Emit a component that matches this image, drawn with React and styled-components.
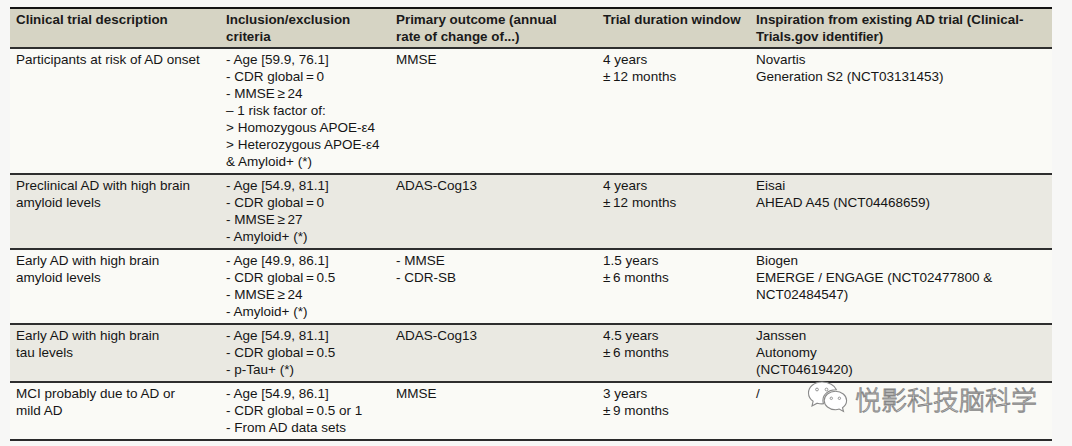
import React from "react";
import styled, { createGlobalStyle } from "styled-components";

const GlobalStyle = createGlobalStyle`
  html, body {
    margin: 0;
    padding: 0;
    background: #f7f7f6;
  }
  body {
    font-family: "Liberation Sans", Arial, sans-serif;
    color: #151515;
  }
`;

const Page = styled.div`
  position: relative;
  padding: 7px 0 0 10px;
  height: 446px;
  overflow: hidden;
  box-sizing: border-box;
`;

const Table = styled.table`
  width: 1042px;
  border-collapse: collapse;
  table-layout: fixed;
  border-top: 2px solid #141414;
  border-bottom: 2px solid #2a2a2a;
`;

const HeadRow = styled.tr`
  background: #d6d4c4;
  border-bottom: 1px solid #3c3c3c;
`;

const HeadCell = styled.th`
  text-align: left;
  vertical-align: top;
  padding: 2px 6px 2px 6px;
  font-size: 13.4px;
  line-height: 17px;
  font-weight: 700;
  color: #1a1a1a;
`;

const Row = styled.tr`
  background: ${({ $shaded }) => ($shaded ? "#eae9e2" : "#fafaf6")};
  border-top: 2px solid #2e2e2e;
`;

const Cell = styled.td`
  vertical-align: top;
  padding: 2px 6px 3px 6px;
  font-size: 13.5px;
  line-height: 17px;
`;

const Line = styled.div`
  white-space: nowrap;
`;

const Watermark = styled.div`
  position: absolute;
  left: 806px;
  top: 379px;
  display: flex;
  align-items: center;
  gap: 7px;
  pointer-events: none;
`;

const WatermarkText = styled.span`
  font-family: "Noto Sans CJK SC", sans-serif;
  font-size: 26px;
  font-weight: 300;
  color: #ffffff;
  -webkit-text-stroke: 0.9px #858585;
`;

const COLS = [210, 170, 207, 153, 302];

const HEAD = [
  ["Clinical trial description"],
  ["Inclusion/exclusion", "criteria"],
  ["Primary outcome (annual", "rate of change of...)"],
  ["Trial duration window"],
  ["Inspiration from existing AD trial (Clinical-", "Trials.gov identifier)"],
];

const ROWS = [
  [
    ["Participants at risk of AD onset"],
    [
      "- Age [59.9, 76.1]",
      "- CDR global\u2009=\u20090",
      "- MMSE\u2009\u2265\u200924",
      "\u2013 1 risk factor of:",
      "> Homozygous APOE-\u03b54",
      "> Heterozygous APOE-\u03b54",
      "& Amyloid+ (*)",
    ],
    ["MMSE"],
    ["4 years", "\u00b1\u200912 months"],
    ["Novartis", "Generation S2 (NCT03131453)"],
  ],
  [
    ["Preclinical AD with high brain", "amyloid levels"],
    [
      "- Age [54.9, 81.1]",
      "- CDR global\u2009=\u20090",
      "- MMSE\u2009\u2265\u200927",
      "- Amyloid+ (*)",
    ],
    ["ADAS-Cog13"],
    ["4 years", "\u00b1\u200912 months"],
    ["Eisai", "AHEAD A45 (NCT04468659)"],
  ],
  [
    ["Early AD with high brain", "amyloid levels"],
    [
      "- Age [49.9, 86.1]",
      "- CDR global\u2009=\u20090.5",
      "- MMSE\u2009\u2265\u200924",
      "- Amyloid+ (*)",
    ],
    ["- MMSE", "- CDR-SB"],
    ["1.5 years", "\u00b1\u20096 months"],
    ["Biogen", "EMERGE / ENGAGE (NCT02477800 &", "NCT02484547)"],
  ],
  [
    ["Early AD with high brain", "tau levels"],
    ["- Age [54.9, 81.1]", "- CDR global\u2009=\u20090.5", "- p-Tau+ (*)"],
    ["ADAS-Cog13"],
    ["4.5 years", "\u00b1\u20096 months"],
    ["Janssen", "Autonomy", "(NCT04619420)"],
  ],
  [
    ["MCI probably due to AD or", "mild AD"],
    ["- Age [54.9, 86.1]", "- CDR global\u2009=\u20090.5 or 1", "- From AD data sets"],
    ["MMSE"],
    ["3 years", "\u00b1\u20099 months"],
    ["/"],
  ],
];

const WeChatIcon = () => (
  <svg width="42" height="38" viewBox="0 0 42 38" fill="none">
    <path
      d="M16 3C8 3 2.5 8 2.5 14c0 3.4 1.8 6.3 4.6 8.3L6 27l5.2-2.8c1.5.4 3.1.7 4.8.7.5 0 1 0 1.5-.1-.4-1.1-.6-2.2-.6-3.4 0-6 5.6-10.6 12.5-10.6.3 0 .7 0 1 0C28.8 6.3 22.9 3 16 3z"
      fill="#fff"
      stroke="#8a8a8a"
      strokeWidth="1.1"
    />
    <circle cx="11" cy="10.5" r="1.4" fill="#fff" stroke="#8a8a8a" strokeWidth="0.9" />
    <circle cx="20.5" cy="10.5" r="1.4" fill="#fff" stroke="#8a8a8a" strokeWidth="0.9" />
    <path
      d="M29.4 12.3c-6.2 0-11.2 4.1-11.2 9.2s5 9.2 11.2 9.2c1.3 0 2.6-.2 3.8-.6l4.3 2.4-1-3.8c2.5-1.7 4.1-4.2 4.1-7.2 0-5.1-5-9.2-11.2-9.2z"
      fill="#fff"
      stroke="#8a8a8a"
      strokeWidth="1.1"
    />
    <circle cx="25.3" cy="19.3" r="1.2" fill="#fff" stroke="#8a8a8a" strokeWidth="0.9" />
    <circle cx="33.4" cy="19.3" r="1.2" fill="#fff" stroke="#8a8a8a" strokeWidth="0.9" />
  </svg>
);

export default function App() {
  return (
    <>
      <GlobalStyle />
      <Page>
        <Table>
          <colgroup>
            {COLS.map((w, i) => (
              <col key={i} style={{ width: w }} />
            ))}
          </colgroup>
          <thead>
            <HeadRow>
              {HEAD.map((lines, i) => (
                <HeadCell key={i}>
                  {lines.map((l, j) => (
                    <Line key={j}>{l}</Line>
                  ))}
                </HeadCell>
              ))}
            </HeadRow>
          </thead>
          <tbody>
            {ROWS.map((row, r) => (
              <Row key={r} $shaded={r % 2 === 1}>
                {row.map((lines, c) => (
                  <Cell key={c}>
                    {lines.map((l, j) => (
                      <Line key={j}>{l}</Line>
                    ))}
                  </Cell>
                ))}
              </Row>
            ))}
          </tbody>
        </Table>
        <Watermark>
          <WeChatIcon />
          <WatermarkText>悦影科技脑科学</WatermarkText>
        </Watermark>
      </Page>
    </>
  );
}
